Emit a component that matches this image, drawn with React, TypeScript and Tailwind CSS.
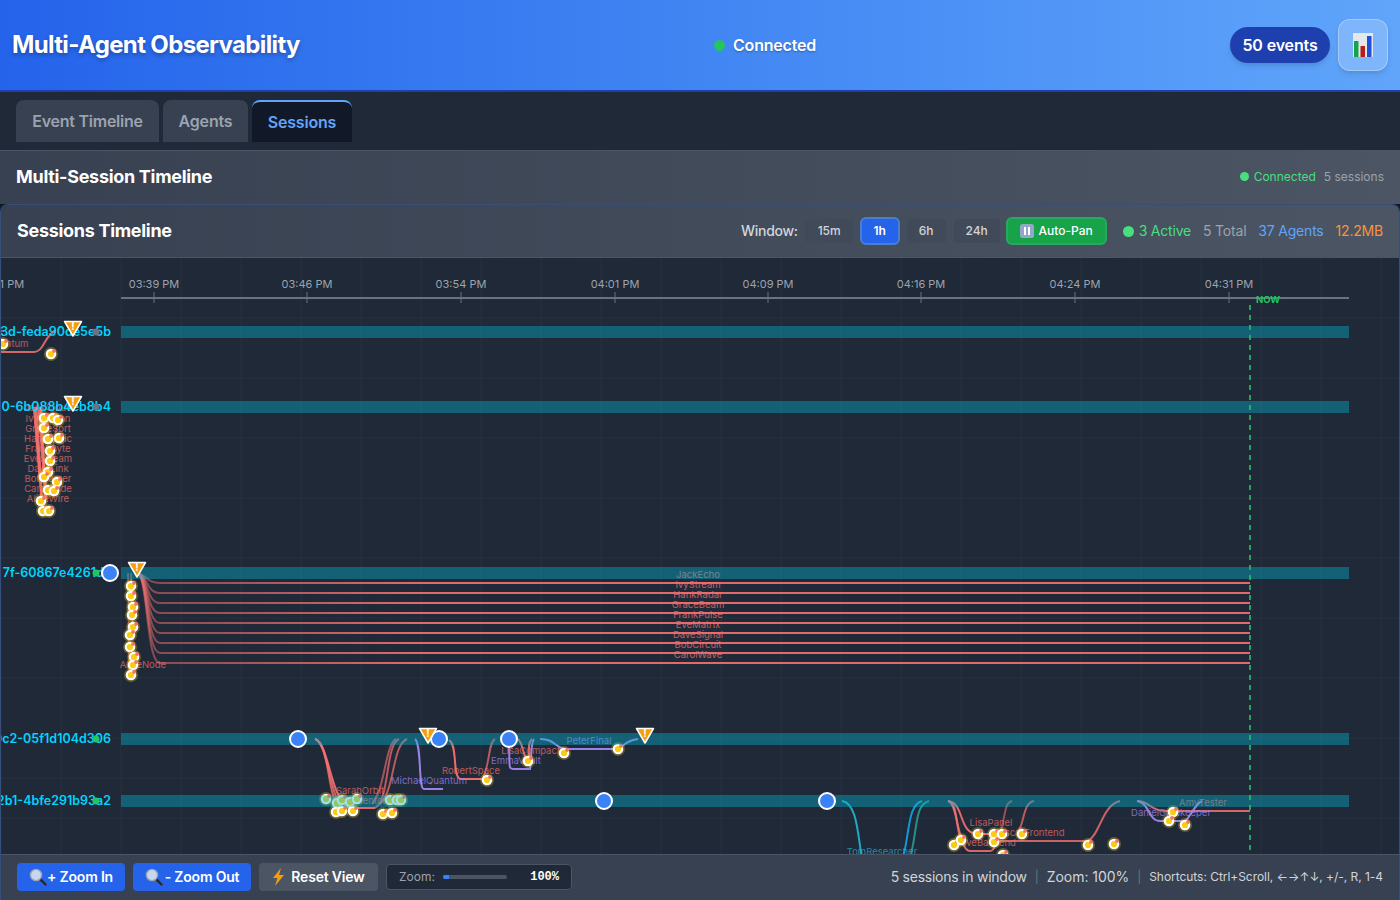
const font = { fontFamily: 'Inter, "Liberation Sans", sans-serif' };

const ticks = [
  { x: 154, label: '03:39 PM' },
  { x: 307, label: '03:46 PM' },
  { x: 461, label: '03:54 PM' },
  { x: 615, label: '04:01 PM' },
  { x: 768, label: '04:09 PM' },
  { x: 921, label: '04:16 PM' },
  { x: 1075, label: '04:24 PM' },
  { x: 1229, label: '04:31 PM' },
];

const RED = '#f87171';
const PURPLE = '#a78bfa';

const trackRows = [326, 401, 567, 733, 795];

const sessionLabels = [
  { y: 336, text: '13d-feda90de5e5b', dot: '#6b7280' },
  { y: 411, text: '50-6b088b4eb8b4', dot: '#6b7280' },
  { y: 577, text: '7f-60867e4261dc', dot: '#22c55e' },
  { y: 743, text: '0c2-05f1d104d306', dot: '#22c55e' },
  { y: 805, text: '2b1-4bfe291b93a2', dot: '#22c55e' },
];

const laneRows = [
  { y: 583, name: 'JackEcho' },
  { y: 593, name: 'IvyStream' },
  { y: 603, name: 'HankRadar' },
  { y: 613, name: 'GraceBeam' },
  { y: 623, name: 'FrankPulse' },
  { y: 633, name: 'EveMatrix' },
  { y: 643, name: 'DaveSignal' },
  { y: 653, name: 'BobCircuit' },
  { y: 663, name: 'CarolWave' },
];

const stackNames = ['JackCloud', 'IvyPython', 'GraceSort', 'HankLogic', 'FrankByte', 'EveStream', 'DaveLink', 'BobParser', 'CarolCode', 'AliceWire'];

const curves = [
  // session 1
  { d: 'M0 352 L34 352 C44 352 44 336 55 331', c: RED, w: 2, o: 0.85 },
  { d: 'M0 331 L4 331', c: PURPLE, w: 2, o: 0.6 },
  // session 2 bundle
  { d: 'M36 407 L42 505', c: RED, w: 3, o: 0.9 },
  { d: 'M39 407 L46 500', c: RED, w: 3, o: 0.9 },
  { d: 'M34 407 L40 480', c: RED, w: 2.5, o: 0.9 },
  { d: 'M41 407 L44 470', c: RED, w: 2.5, o: 0.9 },
  { d: 'M42 505 L58 420', c: RED, w: 1.5, o: 0.5 },
  // session 3
  { d: 'M128 573 L129 675', c: RED, w: 1.5, o: 0.6 },
  { d: 'M131 573 L133 640', c: RED, w: 1.5, o: 0.6 },
  // session 4
  { d: 'M315 739 C328 741 328 790 336 803', c: RED, w: 2, o: 0.8 },
  { d: 'M315 739 C326 741 330 790 340 806', c: RED, w: 2, o: 0.8 },
  { d: 'M315 739 C330 745 330 800 350 808 L375 808', c: RED, w: 2, o: 0.9 },
  { d: 'M375 808 C390 800 385 745 399 739', c: RED, w: 2, o: 0.7 },
  { d: 'M380 804 C395 790 392 745 407 739', c: RED, w: 2, o: 0.7 },
  { d: 'M372 804 C385 790 385 745 396 739', c: RED, w: 2, o: 0.6 },
  { d: 'M415 739 C422 745 418 789 424 789 L443 789', c: PURPLE, w: 2, o: 0.9 },
  { d: 'M449 740 C458 745 452 779 461 779 L487 779', c: RED, w: 2, o: 0.95 },
  { d: 'M483 777 C490 765 488 743 495 739', c: RED, w: 2, o: 0.7 },
  { d: 'M509 745 C510 768 508 769 514 769 L530 769 C532 760 530 745 534 739', c: PURPLE, w: 2, o: 0.9 },
  { d: 'M518 739 C524 745 522 755 528 761 C531 752 526 745 532 739', c: RED, w: 2, o: 0.85 },
  { d: 'M540 739 C556 739 555 749 567 749 L613 749 C625 749 622 741 638 739', c: PURPLE, w: 2, o: 0.9 },
  // session 5
  { d: 'M842 801 C858 803 858 840 862 858', c: '#22b8cf', w: 2, o: 0.9 },
  { d: 'M903 858 C910 830 908 805 922 801', c: '#0ea5e9', w: 2, o: 0.9 },
  { d: 'M910 858 C918 830 914 805 929 801', c: '#2dd4bf', w: 2, o: 0.6 },
  { d: 'M948 801 C965 803 958 834 978 834 L1002 834', c: RED, w: 2, o: 0.9 },
  { d: 'M948 801 C958 803 958 851 970 851 L990 851 C996 851 994 842 997 841', c: RED, w: 2, o: 0.85 },
  { d: 'M948 801 C958 803 955 825 961 840', c: RED, w: 2, o: 0.8 },
  { d: 'M1000 833 C1006 815 1004 803 1012 801', c: RED, w: 2, o: 0.55 },
  { d: 'M1017 833 C1025 825 1022 803 1034 801', c: RED, w: 2, o: 0.7 },
  { d: 'M997 841 L1088 841 C1100 835 1102 805 1120 801', c: RED, w: 2, o: 0.8 },
  { d: 'M1137 801 C1150 803 1148 821 1160 821 L1185 821 C1192 815 1194 805 1202 801', c: PURPLE, w: 2, o: 0.9 },
  { d: 'M1137 801 C1150 801 1150 811 1165 811 L1250 811', c: RED, w: 2, o: 0.85 },
];

const dots: [number, number][] = [
  [3, 344], [51, 354],
  [44, 418], [53, 418], [58, 420], [44, 428], [59, 438], [48, 439], [50, 451], [50, 461], [48, 472], [44, 477], [57, 482], [48, 490], [54, 491], [41, 501], [43, 511], [49, 511],
  [131, 586], [131, 596], [133, 607], [132, 615], [133, 627], [130, 635], [130, 647], [134, 657], [133, 665], [131, 675],
  [326, 799], [337, 803], [342, 800], [350, 802], [357, 799], [390, 800], [397, 800], [401, 800],
  [336, 812], [342, 811], [353, 811], [383, 814], [392, 813],
  [487, 780], [528, 761], [564, 753], [618, 749],
  [978, 834], [994, 834], [1002, 834], [1022, 834], [954, 845], [961, 840], [994, 842], [1088, 845], [1114, 844], [1003, 855],
  [1173, 812], [1169, 821], [1185, 825],
];

const agentLabels = [
  { x: 8, y: 347, t: 'Quantum', c: RED },
  { x: 560, y: 754, t: 'LisaCompact', c: RED, end: true },
  { x: 516, y: 764, t: 'EmmaVault', c: PURPLE },
  { x: 471, y: 774, t: 'RobertSpace', c: RED },
  { x: 429, y: 784, t: 'MichaelQuantum', c: PURPLE },
  { x: 589, y: 744, t: 'PeterFinal', c: PURPLE },
  { x: 360, y: 794, t: 'SarahOrbit', c: RED },
  { x: 360, y: 804, t: 'NinaMentor', c: RED },
  { x: 143, y: 668, t: 'AliceNode', c: RED },
  { x: 882, y: 855, t: 'TomResearcher', c: '#22b8cf' },
  { x: 991, y: 826, t: 'LisaPanel', c: RED },
  { x: 1031, y: 836, t: 'OscarFrontend', c: RED },
  { x: 985, y: 846, t: 'DaveBackend', c: RED },
  { x: 1203, y: 806, t: 'AmyTester', c: RED },
  { x: 1171, y: 816, t: 'DanielGatekeeper', c: PURPLE },
];

function EventDot({ x, y }: { x: number; y: number }) {
  return (
    <g>
      <circle cx={x} cy={y} r={7} fill="#facc15" opacity={0.3} />
      <circle cx={x} cy={y} r={4.2} fill="#facc15" stroke="#ffffff" strokeWidth={2.2} />
      <circle cx={x + 3} cy={y - 3} r={1.9} fill={RED} />
    </g>
  );
}

function Warning({ x, y }: { x: number; y: number }) {
  return (
    <g>
      <polygon points={`${x - 8.5},${y - 6.5} ${x + 8.5},${y - 6.5} ${x},${y + 8}`} fill="#f59e0b" stroke="#ffffff" strokeWidth={1.5} strokeLinejoin="round" />
      <text x={x} y={y + 2} textAnchor="middle" fontSize={10} fontWeight={700} fill="#ffffff">!</text>
    </g>
  );
}

function Timeline() {
  const vLines = Array.from({ length: 24 }, (_, i) => 1 + i * 60);
  const hLines = [318, 378, 438, 498, 558, 618, 678, 738, 778, 818];
  return (
    <svg viewBox="1 258 1398 596" className="block w-full h-full" style={font}>
      <defs>
        <linearGradient id="laneFade" gradientUnits="userSpaceOnUse" x1="137" y1="0" x2="420" y2="0">
          <stop offset="0" stopColor={RED} stopOpacity={0.45} />
          <stop offset="1" stopColor={RED} stopOpacity={0.9} />
        </linearGradient>
      </defs>

      {vLines.map((x) => <line key={x} x1={x} y1={258} x2={x} y2={854} stroke="#374151" strokeOpacity={0.35} />)}
      {hLines.map((y) => <line key={y} x1={0} y1={y} x2={1400} y2={y} stroke="#374151" strokeOpacity={0.35} />)}

      {ticks.map((t) => (
        <g key={t.x}>
          <text x={t.x} y={288} textAnchor="middle" fontSize={11} fill="#9ca3af">{t.label}</text>
          <line x1={t.x} y1={292} x2={t.x} y2={303} stroke="#6b7280" />
        </g>
      ))}
      <text x={0} y={288} textAnchor="middle" fontSize={11} fill="#9ca3af">03:31 PM</text>
      <line x1={121} y1={298} x2={1349} y2={298} stroke="#6b7280" strokeWidth={2} />

      {laneRows.map((r) => (
        <g key={r.y}>
          <path d={`M137 573 C148 575 146 ${r.y} 160 ${r.y} L1250 ${r.y}`} fill="none" stroke="url(#laneFade)" strokeWidth={2} />
          <text x={698} y={r.y - 5} textAnchor="middle" fontSize={9.5} fill={RED} opacity={0.75}>{r.name}</text>
        </g>
      ))}

      {curves.map((c, i) => <path key={i} d={c.d} fill="none" stroke={c.c} strokeWidth={c.w} opacity={c.o} />)}

      {stackNames.map((n, i) => (
        <text key={n} x={48} y={i === 0 ? 411 : 412 + i * 10} textAnchor="middle" fontSize={9.5} fill={RED} opacity={0.7}>{n}</text>
      ))}
      {agentLabels.map((l) => (
        <text key={l.t} x={l.x} y={l.y} textAnchor={l.end ? 'end' : 'middle'} fontSize={9.5} fill={l.c} opacity={0.7}>{l.t}</text>
      ))}

      {dots.map(([x, y], i) => <EventDot key={i} x={x} y={y} />)}

      {trackRows.map((y) => <rect key={y} x={121} y={y} width={1228} height={12} fill="#06b6d4" opacity={0.4} />)}

      <line x1={1250} y1={305} x2={1250} y2={854} stroke="#22c55e" strokeWidth={2} strokeOpacity={0.8} strokeDasharray="5 5" />
      <text x={1268} y={303} textAnchor="middle" fontSize={9.5} fontWeight={700} fill="#22c55e">NOW</text>

      {sessionLabels.map((s) => (
        <g key={s.y}>
          <text x={111} y={s.y} textAnchor="end" fontSize={12.5} fontWeight={600} fill="#00d4ff">{s.text}</text>
          <circle cx={96} cy={s.y - 4} r={3.5} fill={s.dot} />
        </g>
      ))}

      {[[110, 573], [298, 739], [439, 739], [509, 739], [604, 801], [827, 801]].map(([x, y]) => (
        <circle key={x} cx={x} cy={y} r={8} fill="#3b82f6" stroke="#ffffff" strokeWidth={2} />
      ))}
      {[[73, 328], [73, 403], [137, 569], [428, 735], [645, 735]].map(([x, y]) => <Warning key={x + y} x={x} y={y} />)}
    </svg>
  );
}

function Magnifier() {
  return (
    <svg width="18" height="18" viewBox="0 0 18 18" className="shrink-0">
      <line x1="10.5" y1="10.5" x2="16.5" y2="16.5" stroke="#27272a" strokeWidth="2.4" strokeLinecap="round" />
      <circle cx="7" cy="7" r="5.6" fill="#c7d8ee" stroke="#9ca3af" strokeWidth="1.4" />
    </svg>
  );
}

function Bolt() {
  return (
    <svg width="13" height="18" viewBox="0 0 13 18" className="shrink-0">
      <polygon points="9,0 1,10 5.5,10 3,18 12,7 7,7" fill="#f59e0b" />
    </svg>
  );
}

function BarsIcon() {
  return (
    <svg width="20" height="24" viewBox="0 0 20 24">
      <rect x="0" y="0" width="20" height="24" fill="#e5e7eb" />
      <rect x="1" y="8" width="4.5" height="16" fill="#16a34a" />
      <rect x="7.5" y="13" width="4.5" height="11" fill="#b91c1c" />
      <rect x="14" y="3" width="4.5" height="21" fill="#1d4ed8" />
    </svg>
  );
}

function PauseIcon() {
  return (
    <svg width="14" height="14" viewBox="0 0 14 14" className="shrink-0">
      <rect width="14" height="14" rx="2.5" fill="#93a8c9" />
      <rect x="4" y="3" width="2" height="8" fill="#ffffff" />
      <rect x="8" y="3" width="2" height="8" fill="#ffffff" />
    </svg>
  );
}

export default function App() {
  return (
    <div className="w-[1400px] h-[900px] overflow-hidden flex flex-col bg-[#111827]" style={font}>
      {/* Header */}
      <header className="h-[92px] shrink-0 flex items-center justify-between pl-3 pr-3 bg-gradient-to-r from-[#2563eb] to-[#60a5fa] border-b-2 border-[#1e40af] shadow-lg">
        <h1 className="w-[702px] text-2xl font-bold text-white [text-shadow:0_2px_4px_rgba(0,0,0,0.3)] tracking-[-0.65px]">Multi-Agent Observability</h1>
        <div className="flex items-center gap-2 flex-1">
          <span className="w-[11px] h-[11px] rounded-full bg-[#22c55e]"></span>
          <span className="text-base font-semibold text-white tracking-[-0.2px] [text-shadow:0_1px_2px_rgba(0,0,0,0.3)]">Connected</span>
        </div>
        <div className="flex items-center gap-2">
          <span className="w-[100px] h-9 flex items-center justify-center rounded-full bg-[#1e40af] text-base font-semibold text-white tracking-[-0.15px] shadow-md">50 events</span>
          <button className="w-[50px] h-[52px] flex items-center justify-center rounded-xl bg-white/20 border border-white/30 shadow-md"><BarsIcon /></button>
        </div>
      </header>

      {/* Tabs */}
      <nav className="h-[58px] shrink-0 bg-[#1f2937] flex items-start gap-1 pl-4 pt-2">
        <button className="w-[143px] h-[42px] rounded-t-lg bg-[#374151] text-base font-semibold tracking-[-0.25px] text-[#9ca3af]">Event Timeline</button>
        <button className="w-[85px] h-[42px] rounded-t-lg bg-[#374151] text-base font-semibold tracking-[-0.2px] text-[#9ca3af]">Agents</button>
        <button className="w-[100px] h-[42px] rounded-t-lg bg-[#111827] border-t-2 border-[#60a5fa] text-base font-semibold tracking-[-0.2px] text-[#60a5fa]">Sessions</button>
      </nav>

      {/* Section title */}
      <div className="h-[54px] shrink-0 flex items-center justify-between px-4 pb-[2px] bg-gradient-to-r from-[#374151] to-[#4b5563] border-t border-[#4b5563]">
        <h2 className="text-lg font-bold text-white tracking-[-0.3px]">Multi-Session Timeline</h2>
        <div className="flex items-center text-xs">
          <span className="w-[9px] h-[9px] rounded-full bg-[#4ade80] mr-[5px]"></span>
          <span className="text-[#4ade80] mr-2">Connected</span>
          <span className="text-[#9ca3af]">5 sessions</span>
        </div>
      </div>

      {/* Timeline panel */}
      <section className="flex-1 min-h-0 flex flex-col rounded-t-lg border border-b-0 border-[#34507a] bg-[#1f2937] overflow-hidden">
        <div className="h-[53px] shrink-0 flex items-center justify-between pl-4 pr-4 bg-gradient-to-r from-[#374151] to-[#4b5563] border-b border-[#4b5563]">
          <h3 className="text-lg font-bold text-white tracking-[-0.3px]">Sessions Timeline</h3>
          <div className="flex items-center">
            <span className="text-sm font-medium text-[#d1d5db] tracking-[-0.3px] mr-[7px]">Window:</span>
            <div className="flex items-center gap-[6px]">
              <button className="w-[49px] h-6 rounded bg-[#414a59] text-xs font-medium text-[#d1d5db]">15m</button>
              <button className="w-[40px] h-7 rounded-md bg-[#2563eb] border-2 border-[#4a7fd0] text-xs font-semibold text-white">1h</button>
              <button className="w-[39px] h-6 ml-px rounded bg-[#414a59] text-xs font-medium text-[#d1d5db]">6h</button>
              <button className="w-[46px] h-6 ml-[2px] rounded bg-[#414a59] text-xs font-medium text-[#d1d5db]">24h</button>
              <button className="w-[101px] h-7 flex items-center justify-center gap-[5px] rounded-md bg-[#16a34a] border-2 border-[#2aa860] text-xs font-medium text-white"><PauseIcon />Auto-Pan</button>
            </div>
            <div className="flex items-center text-sm tracking-[-0.2px] ml-[16px]">
              <span className="w-[11px] h-[11px] rounded-full bg-[#4ade80] mr-[5px]"></span>
              <span className="text-[#4ade80] mr-3">3 Active</span>
              <span className="text-[#9ca3af] mr-3">5 Total</span>
              <span className="text-[#60a5fa] mr-3">37 Agents</span>
              <span className="text-[#fb923c]">12.2MB</span>
            </div>
          </div>
        </div>

        <div className="flex-1 min-h-0 overflow-hidden">
          <Timeline />
        </div>

        {/* Footer controls */}
        <div className="h-[46px] shrink-0 flex items-center justify-between pl-4 pr-4 pb-px bg-[#374151] border-t border-[#4b5563]">
          <div className="flex items-center gap-2">
            <button className="w-[108px] h-7 flex items-center justify-center rounded bg-[#2563eb] text-sm font-semibold tracking-[-0.2px] text-white"><Magnifier />+ Zoom In</button>
            <button className="w-[118px] h-7 flex items-center justify-center gap-[2px] rounded bg-[#2563eb] text-sm font-semibold tracking-[-0.2px] text-white"><Magnifier />- Zoom Out</button>
            <button className="w-[119px] h-7 flex items-center justify-center gap-[6px] rounded bg-[#4b5563] text-sm font-semibold tracking-[-0.2px] text-white"><Bolt />Reset View</button>
            <div className="w-[186px] h-[26px] flex items-center pl-3 pr-3 rounded bg-[#1f2937] border border-[#4b5563]">
              <span className="text-xs text-[#9ca3af] mr-2">Zoom:</span>
              <div className="w-[64px] h-1 rounded-full bg-[#4b5563] overflow-hidden">
                <div className="w-[6px] h-1 bg-[#3b82f6]"></div>
              </div>
              <span className="ml-auto text-xs font-bold text-white" style={{ fontFamily: '"Liberation Mono", monospace' }}>100%</span>
            </div>
          </div>
          <div className="flex items-center text-[#d1d5db]">
            <span className="text-sm tracking-[-0.25px]">5 sessions in window</span>
            <span className="mx-2 text-xs text-[#6b7280]">|</span>
            <span className="text-sm tracking-[-0.05px]">Zoom: 100%</span>
            <span className="mx-2 text-xs text-[#6b7280]">|</span>
            <span className="text-xs tracking-[-0.04px]">Shortcuts: Ctrl+Scroll, ←→↑↓, +/-, R, 1-4</span>
          </div>
        </div>
      </section>
    </div>
  );
}
